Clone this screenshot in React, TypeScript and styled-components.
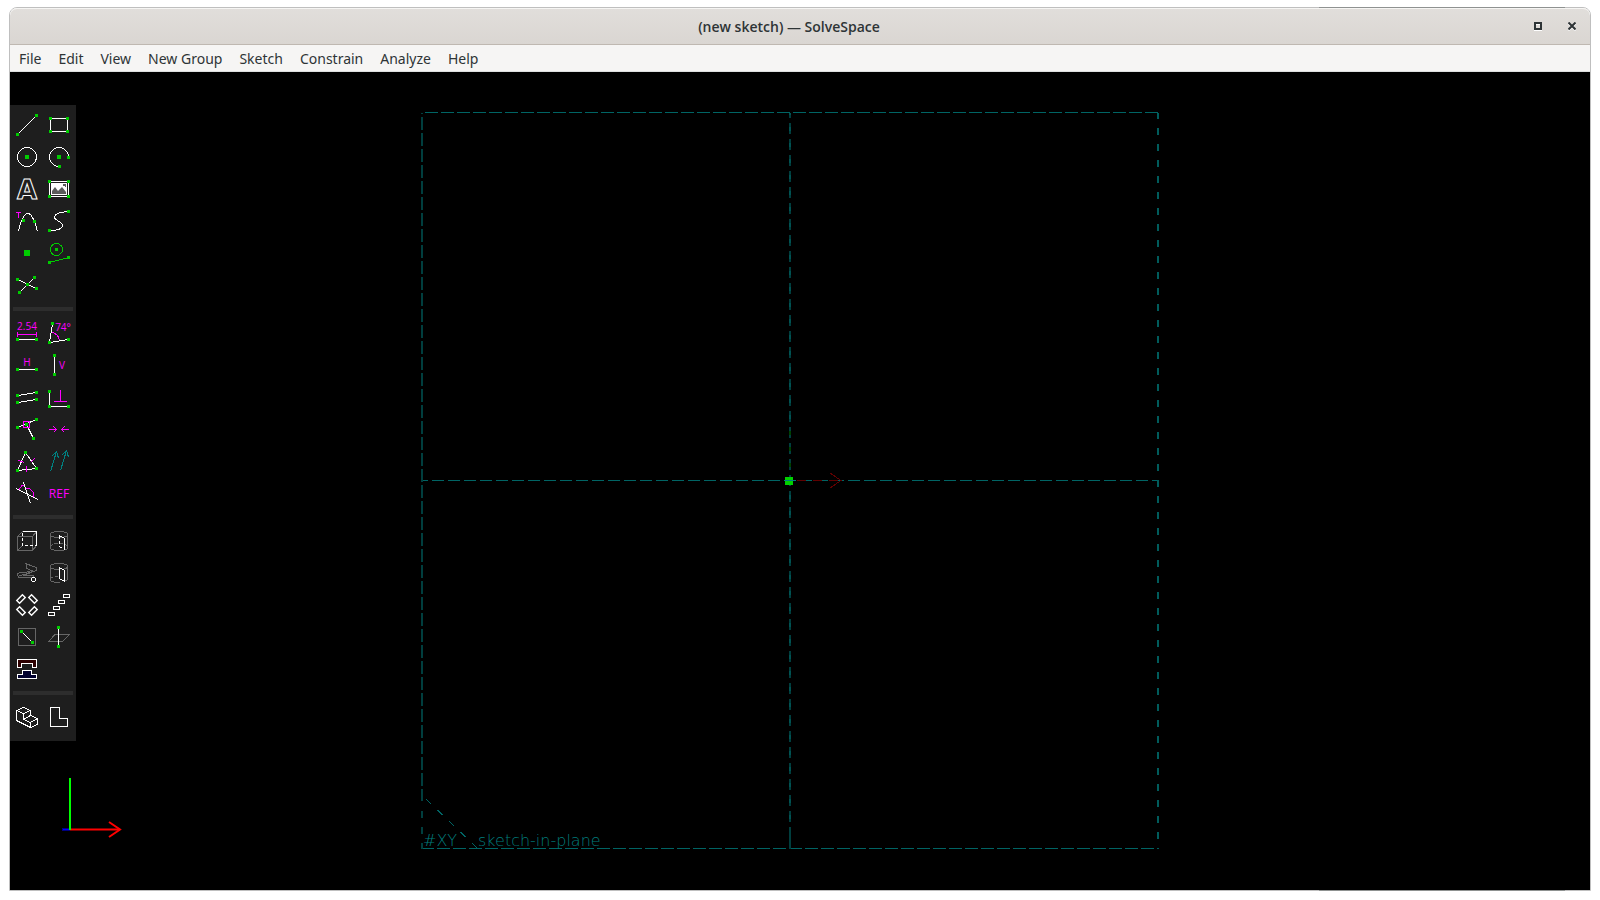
import React from "react";
import styled, { createGlobalStyle, css } from "styled-components";

const GlobalStyle = createGlobalStyle`
  *, *::before, *::after { box-sizing: border-box; }
  body { margin: 0; background: #ffffff; }
`;

const uiFont = `"Noto Sans", "Open Sans", sans-serif`;
const WHITE = "#ffffff";
const GREEN = "#00cc00";
const MAGENTA = "#ff00ff";
const GREY = "#666666";
const TEAL = "#008080";
const PLANE = "#006464";
const PLANE_DIM = "#003e3e";

const Page = styled.div`
  display: flex;
  min-height: 100vh;
  padding: 7px 9px 9px;
`;

const Window = styled.div`
  position: relative;
  display: flex;
  flex: 1;
  flex-direction: column;
  border: 1px solid #bfbfbf;
  border-radius: 8px 8px 0 0;
  font-family: ${uiFont};
  color: #2e3436;
`;

const EdgeShade = styled.div<{ $side: "top" | "bottom" }>`
  position: absolute;
  right: 25px;
  width: 246px;
  height: 1px;
  background: #8f9291;
  ${(p) => (p.$side === "top" ? css`top: -1px;` : css`bottom: -1px;`)}
`;

const TitleBar = styled.header`
  display: flex;
  align-items: center;
  height: 37px;
  padding: 0 1px 0 47px;
  border-bottom: 1px solid #bfb8b1;
  border-radius: 7px 7px 0 0;
  background: linear-gradient(to bottom, #e1dedb, #dad6d2);
  box-shadow: inset 0 1px #f6f5f3;
`;

const Title = styled.h1`
  flex: 1;
  margin: 0;
  padding-top: 2px;
  font-family: "Open Sans", "Noto Sans", sans-serif;
  font-size: 14px;
  font-weight: 600;
  line-height: 20px;
  text-align: center;
`;

const WindowButton = styled.button`
  display: flex;
  align-items: center;
  justify-content: center;
  width: 34px;
  height: 34px;
  padding: 0;
  border: 0;
  background: none;
  color: inherit;
`;

const MenuBar = styled.nav`
  display: flex;
  gap: 1px;
  height: 27px;
  padding-left: 1px;
  border-bottom: 1px solid #dddfdf;
  background: #f6f5f4;
`;

const MenuItem = styled.button`
  padding: 2px 8px 0;
  border: 0;
  background: none;
  color: inherit;
  font-family: inherit;
  font-size: 14px;
  line-height: 24px;
`;

const Workspace = styled.main`
  position: relative;
  display: flex;
  flex: 1;
  align-items: flex-start;
  padding: 33px 0 40px;
  background: #000000;
`;

const Viewport = styled.svg`
  position: absolute;
  inset: 0;
  width: 100%;
  height: 100%;
`;

const Toolbar = styled.div`
  position: relative;
  width: 66px;
  padding: 4px 1px 8px;
  background: #1e1e1e;
`;

const ToolGroup = styled.div`
  display: grid;
  grid-template-columns: 32px 32px;

  & + & {
    margin-top: 6px;
    padding-top: 10px;
    background: linear-gradient(#2d2d2d, #2d2d2d) 2px 0 / 60px 4px no-repeat;
  }
`;

const ToolButton = styled.button`
  width: 32px;
  height: 32px;
  padding: 0;
  border: 0;
  background: none;
`;

const Glyph = styled.svg`
  display: block;
  fill: none;
  stroke-width: 1;
`;

type Pt = [number, number];

/* Square handles, 3px wide, each placed by its top left corner. */
const Dots = ({ at }: { at: Pt[] }) => (
  <>
    {at.map(([x, y]) => (
      <rect key={`${x},${y}`} x={x} y={y} width={3} height={3} fill={GREEN} />
    ))}
  </>
);

const Stroke = ({ d, c = WHITE, fill, dash }: { d: string; c?: string; fill?: string; dash?: string }) => (
  <path d={d} stroke={c} fill={fill} strokeDasharray={dash} shapeRendering="crispEdges" />
);

const Label = ({ x, y, size, children }: { x: number; y: number; size: number; children: string }) => (
  <text x={x} y={y} fill={MAGENTA} fontFamily={`"Open Sans", sans-serif`} fontSize={size} textAnchor="middle">
    {children}
  </text>
);

type Tool = { name: string; icon: React.ReactNode };

const groups: Tool[][] = [
  [
    { name: "Line segment", icon: <><Stroke d="M6.5 25.5L25.5 6.5" /><Dots at={[[5, 24], [24, 5]]} /></> },
    { name: "Rectangle", icon: <><Stroke d="M7.5 9.5H24.5V22.5H7.5z" /><Dots at={[[6, 8], [23, 8], [6, 21], [23, 21]]} /></> },
    {
      name: "Circle",
      icon: <><Stroke d="M6.5 16a9.5 9.5 0 1 0 19 0a9.5 9.5 0 1 0 -19 0" /><rect x={14} y={14} width={4} height={4} fill={GREEN} /></>,
    },
    {
      name: "Arc",
      icon: <><Stroke d="M16 25.5A9.5 9.5 0 1 1 25.5 16" /><rect x={14} y={14} width={4} height={4} fill={GREEN} /><Dots at={[[15, 24], [24, 15]]} /></>,
    },
    {
      name: "Text",
      icon: (
        <text x={16} y={26} textAnchor="middle" fontFamily={`"DejaVu Sans", sans-serif`} fontWeight={700} fontSize={26} stroke={WHITE} fill="none">
          A
        </text>
      ),
    },
    {
      name: "Image",
      icon: (
        <>
          <Stroke d="M6.5 8.5H25.5V23.5H6.5z" />
          <rect x={8} y={10} width={16} height={12} fill={WHITE} />
          <path d="M9 21V18L12 14L15 18L17 16L19 14L23 19V21zM20 11h3v3h-1v-1h-2z" fill="#5a5a5a" />
          <Dots at={[[5, 7], [24, 7], [5, 22], [24, 22]]} />
        </>
      ),
    },
    {
      name: "Tangent arc",
      icon: <><Stroke d="M7.5 26.5C9 17 13 8.5 17 8.5S24 17 26.5 26.5" /><Stroke d="M5 7.5H10M7.5 7V13" c={MAGENTA} /><Dots at={[[11, 14], [22, 15]]} /></>,
    },
    {
      name: "Bezier spline",
      icon: <><Stroke d="M25.5 6.5C17 7 11.5 9 11.5 12.5C11.5 15 19.5 17 19.5 20.5C19.5 24 14 25.5 6.5 25.5" /><Dots at={[[24, 5], [5, 24]]} /></>,
    },
    { name: "Point", icon: <rect x={13} y={13} width={6} height={6} fill={GREEN} /> },
    {
      name: "Toggle construction",
      icon: <><Stroke c={GREEN} d="M7.5 12.5a6 6 0 1 0 12 0a6 6 0 1 0 -12 0M6.5 25.5L25.5 20.5" /><Dots at={[[12, 11], [5, 24], [24, 19]]} /></>,
    },
    {
      name: "Split curves",
      icon: <><Stroke d="M6.5 10.5L25.5 19.5M23.5 8.5L8.5 23.5" /><Dots at={[[5, 9], [22, 7], [24, 18], [7, 22], [15, 14]]} /></>,
    },
  ],
  [
    {
      name: "Distance",
      icon: <><Label x={16} y={13} size={10}>2.54</Label><Stroke c={MAGENTA} d="M6.5 15V20M25.5 15V20M7 17.5H25" /><Stroke d="M6 22.5H26" /><Dots at={[[5, 21], [24, 21]]} /></>,
    },
    {
      name: "Angle",
      icon: <><Label x={20} y={14} size={10}>74°</Label><Stroke c={MAGENTA} d="M8.5 15.5Q15 16 16.5 23.5" /><Stroke d="M9.5 6.5L6.5 25.5L25.5 22.5" /><Dots at={[[8, 5], [5, 24], [24, 21]]} /></>,
    },
    { name: "Horizontal", icon: <><Label x={16} y={17} size={10}>H</Label><Stroke d="M6 20.5H26" /><Dots at={[[5, 19], [24, 19]]} /></> },
    { name: "Vertical", icon: <><Label x={19} y={20} size={10}>V</Label><Stroke d="M11.5 6V26" /><Dots at={[[10, 5], [10, 24]]} /></> },
    {
      name: "Parallel",
      icon: <><Stroke d="M6.5 14.5L25.5 11.5M6.5 21.5L25.5 18.5" /><Dots at={[[5, 13], [24, 10], [5, 20], [24, 17]]} /></>,
    },
    {
      name: "Perpendicular",
      icon: <><Stroke c={MAGENTA} d="M17.5 9V20M11 20.5H24" /><Stroke d="M6.5 10V25.5H26" /><Dots at={[[5, 9], [5, 24], [24, 24]]} /></>,
    },
    {
      name: "Point on line",
      icon: <><Stroke d="M6.5 14.5L25.5 6.5M15.5 11.5L22.5 25.5" /><Dots at={[[5, 13], [24, 5], [14, 10], [21, 24]]} /><Stroke c={MAGENTA} d="M12.5 8.5H18.5V14.5H12.5z" /></>,
    },
    { name: "Symmetric", icon: <Stroke c={MAGENTA} d="M6 16.5H14M10.5 13.5L13.5 16.5L10.5 19.5M26 16.5H18M21.5 13.5L18.5 16.5L21.5 19.5" /> },
    {
      name: "Equal",
      icon: <><Stroke d="M14.5 7.5L6.5 25.5L25.5 23.5z" /><Stroke c={MAGENTA} d="M7 15.5L13.5 17.5M19.5 17.5L23.5 13.5M15.5 21V27" /><Dots at={[[13, 6], [5, 24], [24, 22]]} /></>,
    },
    { name: "Same orientation", icon: <Stroke c={TEAL} d="M7.5 26.5L13.5 6.5M8.5 11.5L13.5 6.5L15.5 13M17.5 25.5L23.5 5.5M18.5 10.5L23.5 5.5L25.5 12" /> },
    {
      name: "Other angle",
      icon: <><Stroke c={MAGENTA} d="M8.5 13V11.5L11 8.5H13M15 11.5H18.5L22.5 15.5V20.5" /><Stroke d="M5 11.5L27 22.5M12.5 5.5L19.5 26.5" /></>,
    },
    { name: "Reference", icon: <Label x={16} y={21} size={12}>REF</Label> },
  ],
  [
    {
      name: "Extrude",
      icon: <><Stroke c={GREY} d="M6.5 11.5H21.5V25.5H6.5zM6.5 11.5L11.5 6.5M21.5 11.5L25.5 6.5M21.5 25.5L25.5 20.5M6.5 25.5L11.5 20.5" /><Stroke d="M11.5 6.5H25.5V20.5" /><Stroke dash="3 2" d="M11.5 8V20.5H25" /></>,
    },
    {
      name: "Lathe",
      icon: (
        <>
          <Stroke c={GREY} d="M7.5 9.5C7.5 5.5 24.5 5.5 24.5 9.5S7.5 13.5 7.5 9.5V22.5C7.5 26.5 24.5 26.5 24.5 22.5V9.5" />
          <Stroke c={GREY} dash="3 2" d="M7.5 21.5C9 17.5 23 17.5 24.5 21.5" />
          <Stroke d="M16.5 10.5L21.5 13.5V24.5" /><Stroke dash="3 2" d="M16.5 11V21.5L21.5 24.5" />
        </>
      ),
    },
    {
      name: "Helix",
      icon: <><Stroke c={GREY} d="M14.5 6.5L25 10.5V13.5L12 18.5H22.5L23 20.5H8L6.5 18.5V16.5L9 15.5H15L20.5 13.5L15.5 11.5V7M8 18.5L14 17.5L21 14.5" /><Stroke d="M20.5 21.5L21.5 20.5H23.5L24.5 21.5V23.5L23.5 24.5H21.5L20.5 23.5z" /></>,
    },
    {
      name: "Revolve",
      icon: (
        <>
          <Stroke c={GREY} d="M16.5 12.5C11 12.5 7.5 11.5 7.5 9.5C7.5 5.5 24.5 5.5 24.5 9.5V22.5M7.5 9.5V22.5C7.5 24.5 12 25.5 16.5 25.5M21.5 12L24.5 10.5M21.5 24.5L24.5 22.5" />
          <Stroke c={GREY} dash="3 2" d="M7.5 21.5C9 19 14 19.5 16.5 19.5" />
          <Stroke d="M16.5 10.5L21.5 13.5V24.5L16.5 21.5z" />
        </>
      ),
    },
    {
      name: "Step rotating",
      icon: (
        <g stroke={WHITE} strokeWidth={1.4}>
          {([[10, 10, -45], [22, 10, 45], [10, 22, 45], [22, 22, -45]] as const).map(([x, y, r]) => (
            <rect key={`${x},${y}`} x={-4} y={-2} width={8} height={4} transform={`translate(${x} ${y}) rotate(${r})`} />
          ))}
        </g>
      ),
    },
    { name: "Step translating", icon: <Stroke d="M20.5 5.5h6v3h-6zM15.5 11.5h6v3h-6zM10.5 17.5h6v3h-6zM5.5 23.5h6v3h-6z" /> },
    { name: "Sketch in workplane", icon: <><Stroke c={GREY} d="M7.5 7.5H24.5V24.5H7.5z" /><Stroke d="M10.5 10.5L21.5 21.5" /><Dots at={[[9, 9], [20, 20]]} /></> },
    { name: "Sketch in 3d", icon: <><Stroke c={GREY} d="M12 13.5H26.5L19.5 20.5H5.5z" /><Stroke d="M15.5 6V26" /><Dots at={[[14, 5], [14, 24]]} /></> },
    {
      name: "Assemble",
      icon: <><Stroke fill="#2e0000" d="M6.5 6.5H25.5V14.5H21.5V10.5H10.5V14.5H6.5z" /><Stroke fill="#00002e" d="M11.5 17.5H20.5V21.5H25.5V25.5H6.5V21.5H11.5z" /></>,
    },
  ],
  [
    {
      name: "Nearest isometric view",
      icon: <Stroke d="M12.5 6.5L19.5 9.5V14.5L26.5 17.5V23.5L19.5 26.5L5.5 19.5V9.5zM5.5 9.5L12.5 12.5L19.5 9.5M12.5 12.5V18.5L19.5 21.5L26.5 17.5M19.5 21.5V26.5M12.5 18.5L19.5 14.5" />,
    },
    { name: "Align view to workplane", icon: <Stroke d="M7.5 6.5H16.5V17.5H24.5V25.5H7.5z" /> },
  ],
];

const menus = ["File", "Edit", "View", "New Group", "Sketch", "Constrain", "Analyze", "Help"];

const SketchView = () => (
  <Viewport role="img" aria-label="Sketch view">
    {/* The work plane hangs on the centre of the view. */}
    <svg x="50%" y="50%" overflow="visible">
      <g transform="translate(-10 0)" fill="none" shapeRendering="crispEdges">
        <g stroke={PLANE} strokeWidth={1}>
          <path d="M368 -368.5H-368" strokeDasharray="13 3" />
          <path d="M-368 -0.5H368" strokeDasharray="12 4" strokeDashoffset={6} />
          <path d="M-368 367.5H368" strokeDasharray="13 3" strokeDashoffset={1} />
        </g>
        <g stroke={PLANE_DIM} strokeWidth={2}>
          <path d="M-368 -368V320" strokeDasharray="13 3" strokeDashoffset={12} />
          <path d="M-368 330V368" strokeDasharray="7 9" />
          <path d="M368 -368V368" stroke="#005c5c" strokeDasharray="7 9" strokeDashoffset={1} />
          <path d="M0 -368V368" strokeDasharray="11 5" strokeDashoffset={6} />
          <path d="M0 -368V368" stroke="#005252" strokeDasharray="4 12" strokeDashoffset={2} />
          <path d="M0 346V368" />
        </g>
        <path d="M-364 318L-312 368" stroke={PLANE} strokeDasharray="7 9" />
        <path d="M0 -50V-4" stroke="#004000" strokeWidth={2} strokeDasharray="4 12" />
        <path d="M7 -0.5H51" stroke="#600000" strokeDasharray="9 7" />
        <path d="M40 -8L51 -0.5L40 7" stroke="#600000" />
        <rect x={-5} y={-4} width={8} height={8} fill="#00d000" />
        <path d="M-6 -0.5H6" stroke="#008080" />
      </g>
      <g transform="translate(-10 0)" fill="#007c7c" fontFamily={`"DejaVu Sans Light", "DejaVu Sans", sans-serif`} fontWeight={200} fontSize={16}>
        <text x={-367} y={365}>#XY</text>
        <text x={-312} y={365}>sketch-in-plane</text>
      </g>
    </svg>
    {/* Axis marker, kept in the lower left corner. */}
    <svg x="0" y="100%" overflow="visible">
      <g transform="translate(0 -60)" fill="none">
        <path d="M52 -0.5H60" stroke="#000080" strokeWidth={3} />
        <path d="M53 -0.5H60" stroke="#0000ff" />
        <path d="M60 -0.5H110" stroke="#800000" strokeWidth={3} />
        <path d="M60 -0.5H110" stroke="#ff0000" />
        <path d="M99 -8L110 -0.5L99 7" stroke="#ff0000" strokeWidth={2} />
        <path d="M60 -52V0" stroke="#00ff00" strokeWidth={2} />
      </g>
    </svg>
  </Viewport>
);

export default function App() {
  return (
    <>
      <GlobalStyle />
      <Page>
        <Window>
          <TitleBar>
            <Title>(new sketch) — SolveSpace</Title>
            <WindowButton aria-label="Maximize">
              <svg width={8} height={9} shapeRendering="crispEdges" fill="none" strokeWidth={2}>
                <path d="M1 2H7V8H1z" stroke="#ffffff" />
                <path d="M1 1H7V7H1z" stroke="#2e3436" />
              </svg>
            </WindowButton>
            <WindowButton aria-label="Close">
              <svg width={8} height={9} fill="none" strokeWidth={2}>
                <path d="M0.5 1.5L7.5 8.5M7.5 1.5L0.5 8.5" stroke="#ffffff" />
                <path d="M0.5 0.5L7.5 7.5M7.5 0.5L0.5 7.5" stroke="#2e3436" />
              </svg>
            </WindowButton>
          </TitleBar>
          <MenuBar>
            {menus.map((name) => (
              <MenuItem key={name}>{name}</MenuItem>
            ))}
          </MenuBar>
          <Workspace>
            <SketchView />
            <Toolbar role="toolbar" aria-label="Sketch tools">
              {groups.map((tools) => (
                <ToolGroup key={tools[0].name}>
                  {tools.map((tool) => (
                    <ToolButton key={tool.name} aria-label={tool.name}>
                      <Glyph width={32} height={32}>{tool.icon}</Glyph>
                    </ToolButton>
                  ))}
                </ToolGroup>
              ))}
            </Toolbar>
          </Workspace>
          <EdgeShade $side="top" />
          <EdgeShade $side="bottom" />
        </Window>
      </Page>
    </>
  );
}
